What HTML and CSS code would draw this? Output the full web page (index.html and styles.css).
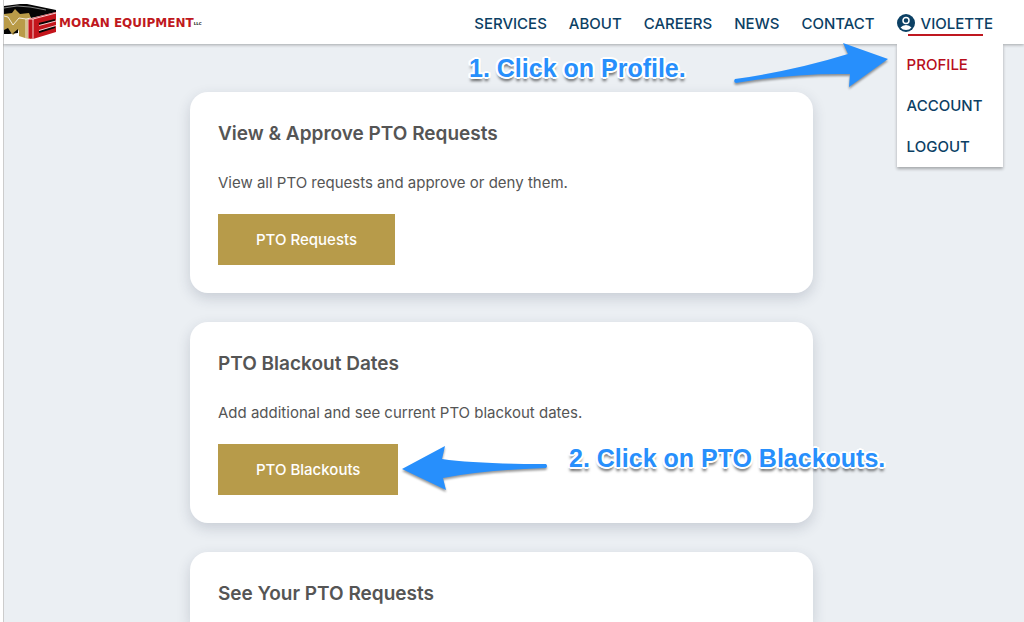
FILE: index.html
```html
<!DOCTYPE html>
<html lang="en">
<head>
<meta charset="utf-8">
<meta name="viewport" content="width=device-width, initial-scale=1">
<title>Moran Equipment – PTO</title>
<link rel="stylesheet" href="styles.css">
</head>
<body>
<header class="header">
  <a class="brand" href="#">
    <svg class="brand-mark" viewBox="4 2 53 37" aria-hidden="true">
      <path fill="#050505" d="M4 5 20 3 27 3 56 9 56 11 31 17 4 14z"/>
      <path fill="none" stroke="#ddd" stroke-width=".6" d="M4 7 17 5 30 6 46 9"/>
      <path fill="#b99b48" d="M4 13 12 12 15 8 20 13 29 12 31 17 31 38 25 37 19 35 19 29 13 34 8 28 7 32 4 32z"/>
      <path fill="#050505" d="M4 29 8 27 12 33 18 28 18 32 9 33 4 33z"/>
      <path fill="none" stroke="#fff" stroke-width=".8" d="M4 15 8 16 13 24 19 17 26 18 31 17M26 18 26 37"/>
      <path fill="#c4151c" d="M28 18 31 17.500 56 11 56 31 33 38 28 37z"/>
      <path fill="none" stroke="#fff" stroke-width=".8" d="M28 18 33 18 33 38M33 18 56 12M28 18 28 37"/>
      <path fill="none" stroke="#050505" stroke-width="2" d="M39 23 55 19M39 31 55 26"/>
      <path fill="none" stroke="#fff" stroke-width=".8" d="M39 24.500 56 20M39 29.500 56 24.500"/>
    </svg>
    <span class="brand-name">MORAN EQUIPMENT</span><span class="brand-suffix">LLC</span>
  </a>
  <nav class="nav" aria-label="Main">
    <a class="nav-link" href="#">SERVICES</a>
    <a class="nav-link" href="#">ABOUT</a>
    <a class="nav-link" href="#">CAREERS</a>
    <a class="nav-link" href="#">NEWS</a>
    <a class="nav-link" href="#">CONTACT</a>
    <div class="account">
      <a class="nav-link account-link" href="#">
        <svg class="account-icon" viewBox="0 0 18 18" aria-hidden="true">
          <circle cx="9" cy="9" r="9" fill="#0b4064"/>
          <circle cx="9" cy="6.500" r="3" fill="none" stroke="#fff" stroke-width="1.500"/>
          <path d="M3.500 13.500Q5.500 11 9 11t5.500 2.500Q12.500 16 9 16t-5.500-2.500z" fill="#fff"/>
        </svg>
        <span>VIOLETTE</span>
      </a>
      <div class="menu">
        <a class="menu-link menu-link-active" href="#">PROFILE</a>
        <a class="menu-link" href="#">ACCOUNT</a>
        <a class="menu-link" href="#">LOGOUT</a>
      </div>
    </div>
  </nav>
</header>
<main class="main">
  <div class="cards">
    <section class="card">
      <h2 class="card-title">View &amp; Approve PTO Requests</h2>
      <p class="card-text">View all PTO requests and approve or deny them.</p>
      <button class="button" type="button">PTO Requests</button>
    </section>
    <section class="card">
      <h2 class="card-title">PTO Blackout Dates</h2>
      <p class="card-text">Add additional and see current PTO blackout dates.</p>
      <button class="button" type="button">PTO Blackouts</button>
    </section>
    <section class="card">
      <h2 class="card-title">See Your PTO Requests</h2>
    </section>
  </div>
</main>
<p class="note note-profile">1. Click on Profile.</p>
<svg class="arrow arrow-profile" viewBox="0 0 156 46" aria-hidden="true">
  <path d="M2 37Q60 29 115 12L110 1 155 17 116 45 117 32Q60 31 3 41 0 40 2 37z"/>
</svg>
<p class="note note-blackouts">2. Click on PTO Blackouts.</p>
<svg class="arrow arrow-blackouts" viewBox="0 0 146 46" aria-hidden="true">
  <path d="M0 23 43 0 40 13Q75 18 144 18 146 20 144 22 80 24 41 32L44 44z"/>
</svg>
</body>
</html>
```
FILE: styles.css
```css
* {
  box-sizing: border-box;
}

body {
  margin: 0;
  position: relative;
  height: 100vh;
  overflow: hidden;
  border-left: 3px solid #fff;
  background: #ebeff3;
  color: #555;
  font-family: Inter, "Open Sans", sans-serif;
  font-size: 15px;
}

a {
  color: inherit;
  text-decoration: none;
}

.header {
  position: relative;
  z-index: 1;
  display: flex;
  justify-content: space-between;
  height: 44px;
  padding-right: 31px;
  border-left: 1px solid #ccc;
  background: #fff;
  box-shadow: 0 1px 3px rgba(0, 0, 0, 0.3);
}

.brand {
  display: flex;
  align-items: center;
  padding-bottom: 2px;
  color: #bf1820;
  font-family: "DejaVu Sans", sans-serif;
  font-weight: 700;
}

.brand-mark {
  width: 53px;
  height: 37px;
  margin-right: 2px;
}

.brand-name {
  padding-top: 4px;
  font-size: 12px;
}

.brand-suffix {
  padding-top: 4px;
  color: #222;
  font-size: 4px;
}

.nav {
  display: flex;
  gap: 22px;
  color: #0b4064;
  font-weight: 500;
}

.nav-link {
  display: flex;
  align-items: center;
  height: 46px;
}

.account {
  position: relative;
}

.account-link {
  gap: 6px;
}

.account-link::after {
  content: "";
  position: absolute;
  top: 34px;
  left: 11px;
  right: 10px;
  height: 2px;
  background: #bf1820;
}

.account-icon {
  width: 18px;
  height: 18px;
}

.menu {
  position: absolute;
  top: 44px;
  left: 0;
  right: -10px;
  background: #fff;
  box-shadow: 0 2px 3px rgba(0, 0, 0, 0.3);
  clip-path: inset(0 -8px -8px);
}

.menu-link {
  display: block;
  padding-left: 10px;
  line-height: 41px;
}

.menu-link-active {
  color: #b80f1d;
}

.main {
  display: grid;
  grid-template-columns: 186fr 623fr 211fr;
  height: calc(100vh - 44px);
  overflow: hidden;
  padding-top: 48px;
  border-left: 1px solid #ccc;
}

.cards {
  grid-column: 2;
  display: grid;
  grid-template-rows: auto auto 1fr;
  gap: 29px;
}

.card {
  padding: 28px;
  border-radius: 18px;
  background: #fff;
  box-shadow: 0 5px 14px rgba(40, 50, 80, 0.18);
}

.card:last-child {
  padding-bottom: 0;
  border-radius: 18px 18px 0 0;
}

.card-title {
  margin: 0 0 25px;
  font-size: 19px;
  font-weight: 600;
  line-height: 27px;
}

.card:last-child .card-title {
  margin-bottom: 0;
}

.card-text {
  margin: 0 0 20px;
  font-size: 15px;
  line-height: 22px;
}

.button {
  display: block;
  height: 51px;
  padding: 0 38px;
  border: 0;
  background: #b79b4a;
  color: #fff;
  font: inherit;
  font-weight: 500;
}

.note {
  position: absolute;
  z-index: 2;
  margin: 0;
  color: #278ffc;
  font-family: "Liberation Sans", Arial, sans-serif;
  font-size: 25px;
  font-weight: 700;
  line-height: 30px;
  white-space: nowrap;
  text-shadow: 2px 0 #fff, -2px 0 #fff, 0 2px #fff, 0 -2px #fff,
    1px 1px #fff, -1px 1px #fff, 1px -1px #fff, -1px -1px #fff,
    2px 1px #fff, -2px 1px #fff, 2px -1px #fff, -2px -1px #fff,
    0 4px 3px rgba(0, 0, 0, 0.6);
}

.note-profile {
  top: 53px;
  left: 466px;
}

.note-blackouts {
  top: 443px;
  left: 566px;
}

.arrow {
  position: absolute;
  z-index: 2;
  overflow: visible;
  fill: #278ffc;
  filter: drop-shadow(0 2px 1px rgba(0, 0, 0, 0.4));
}

.arrow-profile {
  top: 42px;
  left: 730px;
  width: 156px;
  height: 46px;
}

.arrow-blackouts {
  top: 446px;
  left: 399px;
  width: 146px;
  height: 46px;
}
```
